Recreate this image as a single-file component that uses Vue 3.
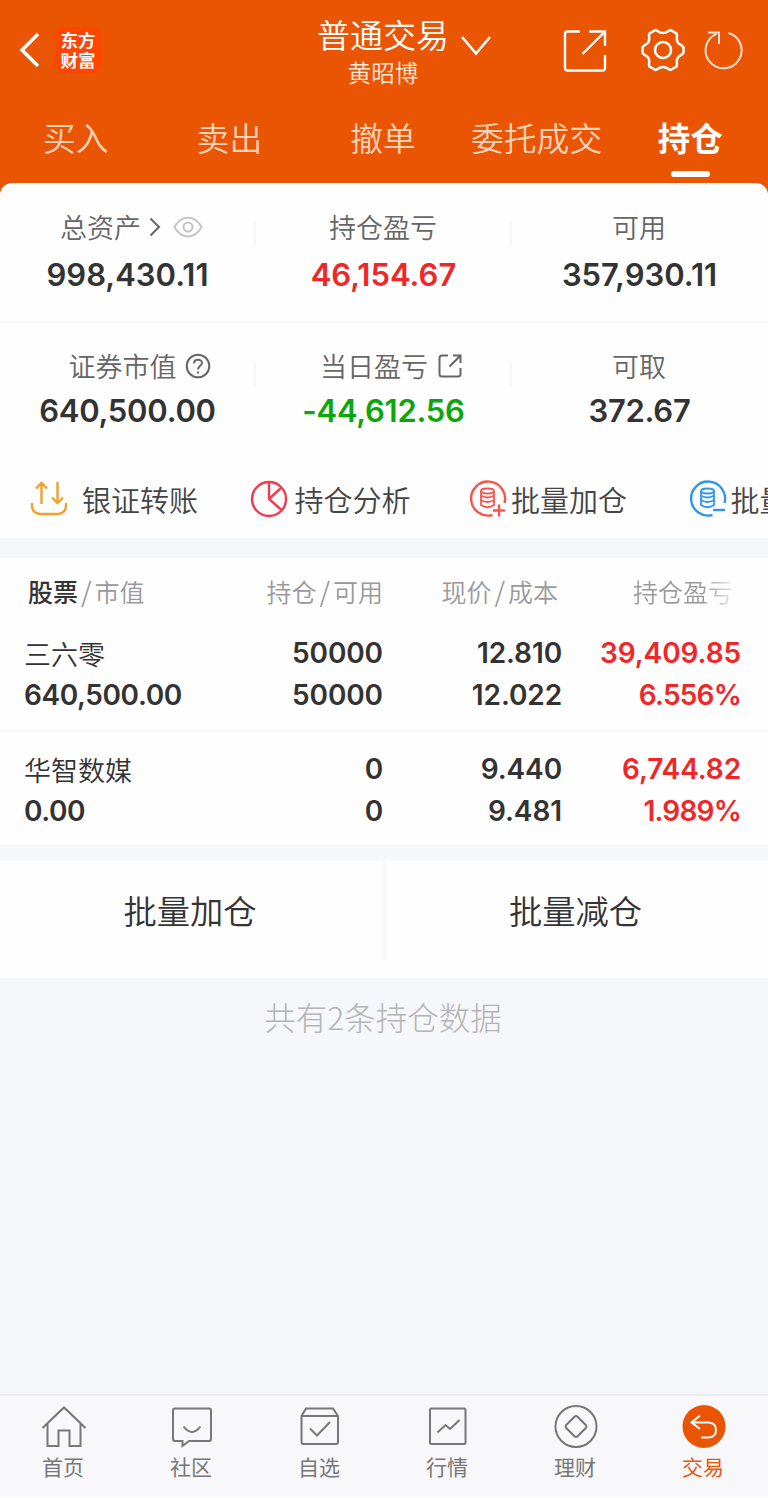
<template>
    <div class="trade-page">
        <header class="header">
            <div class="nav">
                <div class="nav__left">
                    <svg class="icon-back" viewBox="0 0 22 36"><path d="M19 2 L3 18 L19 34" /></svg>
                    <div class="logo"><span>东方</span><span>财富</span></div>
                </div>
                <div class="nav__title">
                    <div class="title">普通交易</div>
                    <div class="user">黄昭博</div>
                </div>
                <div class="nav__right">
                    <svg class="icon-down" viewBox="0 0 32 22"><path d="M2 2 L16 18.500 L30 2" /></svg>
                    <svg class="icon-share" viewBox="0 0 44 44">
                        <path d="M17 2.500 H4.500 Q2 2.500 2 5 V39 Q2 41.500 4.500 41.500 H39.500 Q42 41.500 42 39 V26 M26 2.500 H42 V17 M42 2.500 L19.500 25" />
                    </svg>
                    <svg class="icon-gear" viewBox="0 0 46 46">
                        <path d="M15.500 3 C18 3.500 18.500 6 23 6 C27.500 6 28 3.500 30.500 3 L36.500 6.500 C38 9 35.500 11 37.500 15 C39 18 43 18 43.500 20.500 V25.500 C43 28 39 28 37.500 31 C35.500 35 38 37 36.500 39.500 L30.500 43 C28 42.500 27.500 40 23 40 C18.500 40 18 42.500 15.500 43 L9.500 39.500 C8 37 10.500 35 8.500 31 C7 28 3 28 2.500 25.500 V20.500 C3 18 7 18 8.500 15 C10.500 11 8 9 9.500 6.500 Z" />
                        <circle cx="23" cy="23" r="8" />
                    </svg>
                    <svg class="icon-refresh" viewBox="0 0 42 42">
                        <path d="M25.500 4 A18 18 0 1 1 13.500 4.800 M5 3.500 H16 V15" />
                    </svg>
                </div>
            </div>
            <nav class="tabs">
                <div v-for="tab in tabs" :key="tab" class="tab" :class="{ active: tab === currentTab }">{{ tab }}</div>
            </nav>
        </header>

        <!-- 资产概况 -->
        <section class="assets">
            <div v-for="(row, i) in assets" :key="i" class="assets__row">
                <div v-for="item in row" :key="item.label" class="asset">
                    <div class="asset__label" :class="item.icon">
                        <span>{{ item.label }}</span>
                        <template v-if="item.icon === 'eye'">
                            <svg class="icon-more" viewBox="0 0 12 20"><path d="M1.500 1.500 L10 10 L1.500 18.500" /></svg>
                            <svg class="icon-eye" viewBox="0 0 30 22">
                                <path d="M1.500 11 C8 -1.500 22 -1.500 28.500 11 C22 23.500 8 23.500 1.500 11 Z" />
                                <circle cx="15" cy="11" r="4.500" />
                            </svg>
                        </template>
                        <svg v-if="item.icon === 'help'" class="icon-help" viewBox="0 0 26 26">
                            <circle cx="13" cy="13" r="11.300" />
                            <path d="M9 10.500 C9 5.500 17 5.500 17 10 C17 12.800 13 13 13 16.500 M13 18.500 V20.500" />
                        </svg>
                        <svg v-if="item.icon === 'link'" class="icon-link" viewBox="0 0 24 24">
                            <path d="M10 1.500 H4 Q1.500 1.500 1.500 4 V20 Q1.500 22.500 4 22.500 H20 Q22.500 22.500 22.500 20 V14 M15 1.500 H22.500 V9 M22 2 L11.500 12.500" />
                        </svg>
                    </div>
                    <div class="asset__value" :class="item.color">{{ item.value }}</div>
                </div>
            </div>
        </section>

        <!-- 快捷入口 -->
        <section class="quick">
            <div class="quick__item transfer">
                <svg viewBox="0 0 40 40">
                    <path d="M12.500 25 V4 M7 9.500 L12.500 4 L18 9.500 M28.500 3 V24 M23 18.500 L28.500 24 L34 18.500" />
                    <path d="M3 24 V26 Q3 35 12 35 H28 Q37 35 37 26 V24" />
                </svg>
                <span>银证转账</span>
            </div>
            <div class="quick__item analysis">
                <svg viewBox="0 0 40 40">
                    <circle cx="20" cy="20" r="17" />
                    <path d="M20 3 V20 L32.500 31 M20 20 L32 9" />
                </svg>
                <span>持仓分析</span>
            </div>
            <div class="quick__item add">
                <svg viewBox="0 0 40 40">
                    <path d="M36.500 24 A17 17 0 1 0 24.500 36" />
                    <g class="coins">
                        <ellipse cx="19.500" cy="12" rx="6.500" ry="2.500" />
                        <path d="M13 12 V26 Q19.500 30.500 26 26 V12 M13 16.500 Q19.500 20.500 26 16.500 M13 21 Q19.500 25 26 21" />
                    </g>
                    <path d="M31 25.500 V37.500 M25 31.500 H37" />
                </svg>
                <span>批量加仓</span>
            </div>
            <div class="quick__item reduce">
                <svg viewBox="0 0 40 40">
                    <path d="M36.500 24 A17 17 0 1 0 24.500 36" />
                    <g class="coins">
                        <ellipse cx="19.500" cy="12" rx="6.500" ry="2.500" />
                        <path d="M13 12 V26 Q19.500 30.500 26 26 V12 M13 16.500 Q19.500 20.500 26 16.500 M13 21 Q19.500 25 26 21" />
                    </g>
                    <path d="M25 31 H37" />
                </svg>
                <span>批量减仓</span>
            </div>
        </section>

        <!-- 持仓列表 -->
        <section class="positions">
            <div class="positions__head">
                <div class="col-name"><b>股票</b><i>/</i>市值</div>
                <div>持仓<i>/</i>可用</div>
                <div class="col-price">现价<i>/</i>成本</div>
                <div class="fade">持仓盈亏</div>
            </div>
            <div v-for="p in positions" :key="p.name" class="position">
                <div class="cell cell--name"><span class="name">{{ p.name }}</span><span>{{ p.market }}</span></div>
                <div class="cell"><span>{{ p.hold }}</span><span>{{ p.usable }}</span></div>
                <div class="cell"><span>{{ p.price }}</span><span>{{ p.cost }}</span></div>
                <div class="cell red"><span>{{ p.profit }}</span><span class="rate">{{ p.rate }}</span></div>
            </div>
        </section>

        <section class="batch">
            <div class="batch__btn">批量加仓</div>
            <div class="batch__btn">批量减仓</div>
        </section>

        <p class="total">共有2条持仓数据</p>

        <footer class="tabbar">
            <div class="tabbar__item">
                <svg viewBox="0 0 46 46"><path d="M1.500 24 L23 3.500 L44.500 24 M6.500 20 V42 H17.500 V26.500 H28.500 V42 H39.500 V20" /></svg>
                <span>首页</span>
            </div>
            <div class="tabbar__item">
                <svg viewBox="0 0 46 46">
                    <path d="M6 4.500 H40 Q42 4.500 42 6.500 V35 Q42 37 40 37 H20 L13.500 42 V37 H6 Q4 37 4 35 V6.500 Q4 4.500 6 4.500 Z" />
                    <path d="M14.500 22.500 Q23 33.500 31.500 22.500" />
                </svg>
                <span>社区</span>
            </div>
            <div class="tabbar__item">
                <svg viewBox="0 0 46 46">
                    <path d="M4.500 12 L9 4.500 H36 L41 12 V38 Q41 40 39 40 H6.500 Q4.500 40 4.500 38 Z M4.500 12 H41 M13 24.500 L20 31.500 L33 18" />
                </svg>
                <span>自选</span>
            </div>
            <div class="tabbar__item">
                <svg viewBox="0 0 46 46">
                    <rect x="5" y="4.500" width="35.500" height="35.500" rx="1.500" />
                    <path d="M12.500 28.500 L20.500 21 L25 25 L34.500 16" />
                </svg>
                <span>行情</span>
            </div>
            <div class="tabbar__item">
                <svg viewBox="0 0 46 46">
                    <circle cx="23" cy="22.500" r="20.500" />
                    <path d="M21.500 12.800 Q23 11.300 24.500 12.800 L33 21.200 Q34 22.500 33 23.800 L24.500 32.200 Q23 33.700 21.500 32.200 L13 23.800 Q12 22.500 13 21.200 Z" />
                </svg>
                <span>理财</span>
            </div>
            <div class="tabbar__item active">
                <svg viewBox="0 0 46 46">
                    <circle cx="23" cy="22.500" r="21.500" />
                    <path d="M19 11.500 L10.500 18.500 L19 25 M10.500 18.500 H27.500 Q35 19 35 26 Q35 33 27.500 33.500 H20" />
                </svg>
                <span>交易</span>
            </div>
        </footer>
    </div>
</template>

<script setup>
import { ref } from 'vue'

const tabs = ['买入', '卖出', '撤单', '委托成交', '持仓']
const currentTab = ref('持仓')

// 资产数据
const assets = ref([
    [
        { label: '总资产', value: '998,430.11', icon: 'eye' },
        { label: '持仓盈亏', value: '46,154.67', color: 'red' },
        { label: '可用', value: '357,930.11' },
    ],
    [
        { label: '证券市值', value: '640,500.00', icon: 'help' },
        { label: '当日盈亏', value: '-44,612.56', icon: 'link', color: 'green' },
        { label: '可取', value: '372.67' },
    ],
])

// 持仓数据
const positions = ref([
    { name: '三六零', market: '640,500.00', hold: '50000', usable: '50000', price: '12.810', cost: '12.022', profit: '39,409.85', rate: '6.556%' },
    { name: '华智数媒', market: '0.00', hold: '0', usable: '0', price: '9.440', cost: '9.481', profit: '6,744.82', rate: '1.989%' },
])
</script>

<style>
body {
    margin: 0;
    background: #fff;
}
</style>

<style scoped>
.trade-page {
    display: flex;
    flex-direction: column;
    width: 768px;
    height: 1497px;
    overflow: hidden;
    background: #f6f7fb;
    color: #333;
    font-family: Inter, "Noto Sans CJK SC", sans-serif;
    font-weight: 400;
}

svg {
    flex: none;
    fill: none;
    stroke: currentColor;
    stroke-width: 2;
}

.red {
    color: #f12628;
}

.green {
    color: #0ba60b;
}

/* 头部 */
.header {
    height: 195px;
    margin-bottom: -12px;
    background: #ea5504;
    color: #fff;
    font-family: "Noto Sans CJK SC", sans-serif;
}

.nav {
    display: grid;
    grid-template-columns: 317px 132px 1fr;
    height: 100px;
}

.nav__left {
    display: flex;
    align-items: center;
    padding-left: 19px;

    .icon-back {
        width: 22px;
        height: 36px;
        stroke-width: 3.6;
    }
}

.logo {
    display: flex;
    flex-direction: column;
    justify-content: center;
    align-items: center;
    width: 46px;
    height: 46px;
    margin-left: 14px;
    border-radius: 8px;
    background: #ff4503;
    font-size: 17.5px;
    font-weight: 700;
    line-height: 20px;
}

.nav__title {
    padding-top: 13px;
    text-align: center;
    white-space: nowrap;

    .title {
        font-size: 33px;
        font-weight: 350;
        line-height: 42px;
    }

    .user {
        font-size: 23.5px;
        font-weight: 350;
        line-height: 34px;
        color: #ffe8dc;
    }
}

.nav__right {
    display: flex;
    align-items: center;

    .icon-down {
        width: 32px;
        height: 22px;
        margin: -8px 71px 0 11px;
        stroke-width: 2.6;
    }

    .icon-share {
        width: 44px;
        height: 44px;
        margin: 2px 33px 0 0;
        stroke-width: 2.4;
    }

    .icon-gear {
        width: 46px;
        height: 46px;
        stroke-width: 2.6;
    }

    .icon-refresh {
        width: 42px;
        height: 42px;
        margin-left: 17px;
        color: #ffe3d4;
    }
}

.tabs {
    display: grid;
    grid-template-columns: repeat(5, 1fr);
    height: 83px;
    margin-left: -1px;
    margin-right: 1px;
}

.tab {
    display: flex;
    flex-direction: column;
    align-items: center;
    padding-top: 13px;
    font-size: 32.8px;
    font-weight: 350;
    line-height: 48px;
    color: #ffd2b8;

    &.active {
        color: #fff;
        font-size: 32.5px;
        font-weight: 700;
    }

    &.active::after {
        content: '';
        width: 39px;
        height: 6px;
        margin-top: 10px;
        border-radius: 3px;
        background: #fff;
    }
}

/* 资产 */
.assets {
    border-radius: 12px 12px 0 0;
    background: #fefefe;
}

.assets__row {
    display: grid;
    grid-template-columns: repeat(3, 1fr);
    box-sizing: border-box;
    height: 138px;
    padding-top: 24px;

    & + & {
        height: 139px;
        border-top: 2px solid #f7f7f8;
    }

    & + & .asset__label {
        margin-top: -1px;
    }

    & + & .asset__value {
        margin-top: 5px;
        letter-spacing: -0.25px;
    }
}

.asset {
    display: flex;
    flex-direction: column;
    align-items: center;
    background: linear-gradient(#f7f7f7, #f7f7f7) right 14px / 2px 26px no-repeat;

    &:last-child {
        background: none;
    }
}

.asset__label {
    display: flex;
    align-items: center;
    height: 40px;
    padding-right: 2px;
    font-size: 27px;
    font-weight: 350;
    color: #666;

    span {
        margin-top: -2px;
    }

    &.eye {
        padding: 0 0 0 7px;
    }

    &.help {
        padding: 0 0 0 23px;
    }

    &.link {
        padding: 0 0 0 14px;
    }

    .icon-more {
        width: 12px;
        height: 20px;
        margin-left: 8px;
    }

    .icon-eye {
        width: 30px;
        height: 22px;
        margin-left: 12px;
        color: #c4c4c4;
    }

    .icon-help {
        width: 26px;
        height: 26px;
        margin-left: 8px;
    }

    .icon-link {
        width: 24px;
        height: 24px;
        margin-left: 10px;
    }
}

.asset__value {
    font-size: 31px;
    font-weight: 600;
    line-height: 40px;
    margin: 8px 1px 0 0;
}

/* 快捷入口 */
.quick {
    display: flex;
    flex: none;
    height: 78px;
    overflow: hidden;
    background: #fefefe;
    font-size: 29px;
    font-weight: 350;
    color: #444;
}

.quick__item {
    display: flex;
    flex: none;
    align-items: center;
    box-sizing: border-box;
    width: 219.5px;
    height: 78px;
    padding-left: 29px;
    white-space: nowrap;

    svg {
        width: 40px;
        height: 40px;
        margin-right: 6px;
        stroke-width: 2.4;
    }

    &.transfer svg {
        margin-right: 13px;
        color: #f0a02c;
    }

    &.analysis svg {
        color: #f53a50;
    }

    &.add svg {
        margin-right: 3px;
        color: #f8544a;
    }

    &.reduce svg {
        margin-right: 3px;
        color: #2c96f0;
    }

    .coins {
        stroke-width: 1.8;
    }
}

/* 持仓 */
.positions {
    margin-top: 20px;
    background: #fefefe;
}

.positions__head,
.position {
    display: grid;
    grid-template-columns: 204px 179px 179px 179px;
    text-align: right;
}

.positions__head {
    height: 68px;
    font-family: "Noto Sans CJK SC", sans-serif;
    font-size: 25px;
    font-weight: 350;
    line-height: 66px;
    color: #999;

    i {
        margin: 0 3px;
        font-size: 27px;
        line-height: 1;
        font-style: normal;
    }

    b {
        font-weight: 500;
        color: #333;
    }

    .col-name {
        padding-left: 28px;
        text-align: left;
    }

    .col-price {
        padding-right: 4px;
    }

    .fade {
        padding-right: 8px;
        background: linear-gradient(90deg, #999 78%, #f4f4f4 98%);
        background-clip: text;
        color: transparent;
    }
}

.position {
    box-sizing: border-box;
    height: 104px;
    padding-top: 6px;
    font-size: 28px;
    font-weight: 600;
    line-height: 42px;

    & + & {
        height: 115px;
        padding-top: 16px;
        border-top: 2px solid #f7f7f8;
    }
}

.cell {
    display: flex;
    flex-direction: column;
    letter-spacing: -0.1px;

    .name {
        height: 42px;
        padding-top: 3px;
        box-sizing: border-box;
        font-size: 27px;
        font-weight: 350;
        letter-spacing: 0;
    }

    .rate {
        letter-spacing: -0.8px;
    }
}

.cell--name {
    padding-left: 24px;
    text-align: left;
    letter-spacing: -0.4px;
}

.batch {
    display: grid;
    grid-template-columns: 1fr 1fr;
    height: 117px;
    margin-top: 16px;
    background: #fefefe;
}

.batch__btn {
    height: 99px;
    padding-right: 4px;
    font-size: 33.3px;
    font-weight: 350;
    line-height: 103px;
    text-align: center;

    & + & {
        margin-left: -1px;
        padding: 0 3px 0 0;
        border-left: 3px solid #f6f7fb;
    }
}

.total {
    margin: 15px 0 0;
    padding-right: 2px;
    font-family: "Noto Sans CJK SC", sans-serif;
    font-size: 31.5px;
    font-weight: 300;
    line-height: 46px;
    text-align: center;
    color: #b4b4b4;
}

/* 底部导航 */
.tabbar {
    display: grid;
    grid-template-columns: repeat(6, 1fr);
    box-sizing: border-box;
    height: 103px;
    margin-top: auto;
    border-top: 2px solid #ebecee;
    background: #f8f8fb;
    color: #777;
}

.tabbar__item {
    display: flex;
    flex-direction: column;
    align-items: center;
    font-size: 21px;
    line-height: 34px;

    svg {
        width: 46px;
        height: 46px;
        margin-top: 8px;
    }

    span {
        padding: 1px 2px 0 0;
    }

    &.active {
        color: #ea5504;
    }

    &.active circle {
        fill: #ea5504;
        stroke: none;
    }

    &.active path {
        stroke: #fff;
    }
}
</style>
